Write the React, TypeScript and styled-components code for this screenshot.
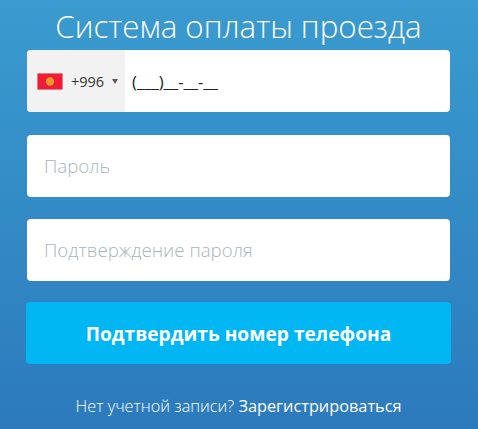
import React from "react";
import styled, { createGlobalStyle } from "styled-components";

const Global = createGlobalStyle`
  html, body { margin: 0; padding: 0; height: 100%; }
  body { font-family: "Open Sans", "Noto Sans", sans-serif; overflow: hidden; }
`;

const Page = styled.div`
  width: 478px;
  height: 429px;
  box-sizing: border-box;
  padding: 0 28px 0 27px;
  background: linear-gradient(180deg, #3a9bcf 0%, #2c7abc 100%);
  display: flex;
  flex-direction: column;
`;

const Title = styled.h1`
  margin: 7px 0 0;
  height: 43px;
  font-size: 31.3px;
  line-height: 38px;
  font-weight: 300;
  color: #fff;
  text-align: center;
  white-space: nowrap;
`;

const Form = styled.form`
  display: flex;
  flex-direction: column;
`;

const Field = styled.div<{ $gap: number }>`
  height: 62px;
  margin-bottom: ${(p) => p.$gap}px;
  background: #fff;
  border-radius: 4px;
  display: flex;
  align-items: center;
  overflow: hidden;
`;

const PhoneCode = styled.div`
  width: 98px;
  height: 100%;
  background: #f2f2f2;
  display: flex;
  align-items: center;
  padding-left: 10px;
  box-sizing: border-box;
  font-size: 14.5px;
  color: #333;
`;

const Flag = styled.svg`
  width: 26px;
  height: 17px;
  display: block;
  margin-right: 8px;
`;

const Caret = styled.span`
  width: 0;
  height: 0;
  margin-left: 8px;
  border-left: 3px solid transparent;
  border-right: 3px solid transparent;
  border-top: 5px solid #6b5550;
`;

const Mask = styled.span`
  margin-left: 7px;
  font-size: 16.6px;
  color: #222;
  white-space: nowrap;
`;

const Placeholder = styled.span`
  margin: 0 0 2px 17px;
  font-size: 18.7px;
  font-weight: 300;
  color: #a9b6bb;
  white-space: nowrap;
`;

const Submit = styled.button`
  height: 62px;
  margin: 0 -1px;
  border: 0;
  border-radius: 4px;
  background: #00b6f3;
  color: #fff;
  font-family: inherit;
  font-size: 19.2px;
  font-weight: 700;
`;

const Footer = styled.p`
  margin: 32px 0 0;
  font-size: 16.3px;
  line-height: 21px;
  font-weight: 300;
  color: #fff;
  text-align: center;
  white-space: nowrap;
`;

const Link = styled.a`
  color: #fff;
  font-weight: 400;
`;

export default function App() {
  return (
    <Page>
      <Global />
      <Title>Система оплаты проезда</Title>
      <Form>
        <Field $gap={23}>
          <PhoneCode>
            <Flag viewBox="0 0 26 17">
              <rect width="26" height="17" fill="#ee1c35" stroke="#e6dcd8" strokeWidth="1" />
              <circle cx="13" cy="8.5" r="4.2" fill="#f0962a" />
            </Flag>
            +996
            <Caret />
          </PhoneCode>
          <Mask>(___)__-__-__</Mask>
        </Field>
        <Field $gap={22}>
          <Placeholder>Пароль</Placeholder>
        </Field>
        <Field $gap={21}>
          <Placeholder>Подтверждение пароля</Placeholder>
        </Field>
        <Submit type="button">Подтвердить номер телефона</Submit>
      </Form>
      <Footer>
        Нет учетной записи? <Link>Зарегистрироваться</Link>
      </Footer>
    </Page>
  );
}
